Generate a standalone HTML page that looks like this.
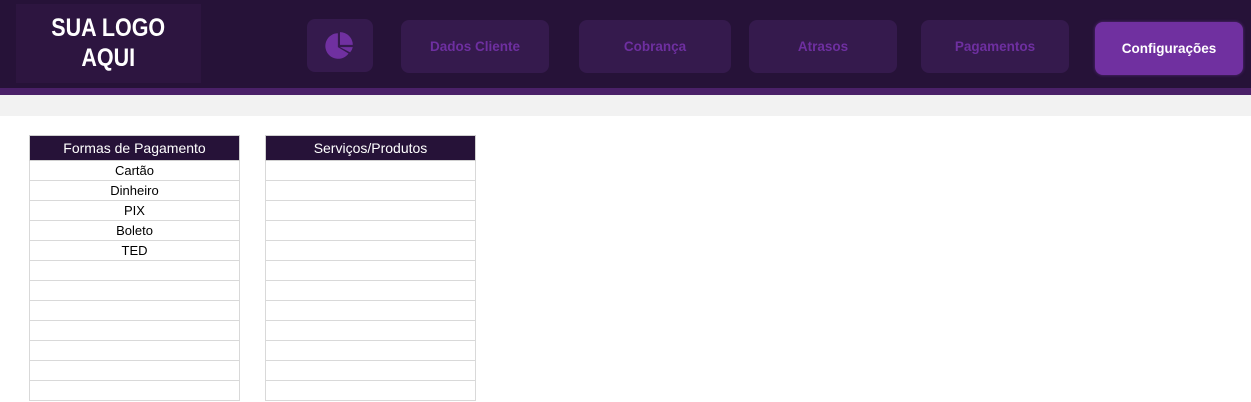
<!DOCTYPE html><html><head><style>
body{margin:0;width:1251px;height:402px;overflow:hidden;background:#fff;font-family:"Liberation Sans",sans-serif;position:relative}
.hd{position:absolute;left:0;top:0;width:1251px;height:88px;background:#261238}
.strip{position:absolute;left:0;top:88px;width:1251px;height:7px;background:#4a2068}
.gray{position:absolute;left:0;top:95px;width:1251px;height:21px;background:#f2f2f2}
.logo{position:absolute;left:16px;top:4px;width:185px;height:79px;background:#2d1540;color:#fff;font-weight:bold;font-size:25px;text-align:center;line-height:30px;padding-top:9px;box-sizing:border-box}
.logo span{display:inline-block;transform:scaleX(0.86)}
.b{position:absolute;top:20px;height:53px;background:#351a4d;border-radius:8px;color:#6e2fa0;font-weight:bold;font-size:13.5px;display:flex;align-items:center;justify-content:center}
.b.on{background:#7030a0;color:#fff;box-shadow:0 0 3px #5a2a80}
table{position:absolute;top:135px;border-collapse:collapse;width:211px;font-size:13px}
th{background:#261238;color:#fff;font-weight:normal;height:24px;font-size:14px;border:1px solid #d0d0d0;padding:0}
td{height:19px;border:1px solid #d9d9d9;text-align:center;padding:0;color:#000}
</style></head><body>
<div class="hd"></div><div class="strip"></div><div class="gray"></div>
<div class="logo"><span>SUA LOGO<br>AQUI</span></div>
<div class="b" style="left:307px;top:19px;width:66px;"><svg width="32" height="32" viewBox="0 0 30 30"><path d="M13 3 A12 12 0 1 0 23 22 L13 16 Z" fill="#7030a0"/><path d="M15 2 A12 12 0 0 1 27 14 L15 14 Z" fill="#7030a0"/><path d="M15 16 L27 16 A12 12 0 0 1 24.5 21 Z" fill="#7030a0"/></svg></div>
<div class="b" style="left:401px;width:148px">Dados Cliente</div>
<div class="b" style="left:579px;width:152px">Cobrança</div>
<div class="b" style="left:749px;width:148px">Atrasos</div>
<div class="b" style="left:921px;width:148px">Pagamentos</div>
<div class="b on" style="left:1095px;top:22px;width:148px">Configurações</div>
<table style="left:29px"><tr><th>Formas de Pagamento</th></tr>
<tr><td>Cartão</td></tr><tr><td>Dinheiro</td></tr><tr><td>PIX</td></tr><tr><td>Boleto</td></tr><tr><td>TED</td></tr>
<tr><td></td></tr><tr><td></td></tr><tr><td></td></tr><tr><td></td></tr><tr><td></td></tr><tr><td></td></tr><tr><td></td></tr></table>
<table style="left:265px"><tr><th>Serviços/Produtos</th></tr>
<tr><td></td></tr><tr><td></td></tr><tr><td></td></tr><tr><td></td></tr><tr><td></td></tr><tr><td></td></tr><tr><td></td></tr><tr><td></td></tr><tr><td></td></tr><tr><td></td></tr><tr><td></td></tr><tr><td></td></tr></table>
</body></html>
